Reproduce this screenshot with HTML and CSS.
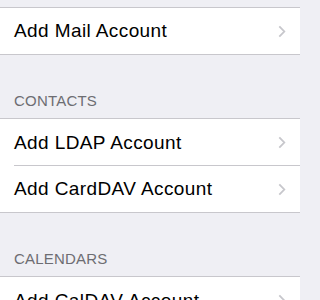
FILE: index.html
```html
<!DOCTYPE html>
<html>
<head>
<meta charset="utf-8">
<link rel="stylesheet" href="styles.css">
</head>
<body>
<div class="page">
  <div class="top-gap"></div>
  <div class="group">
    <div class="row"><span class="label">Add Mail Account</span><svg class="chev" width="8" height="13" viewBox="0 0 8 13"><path d="M1.3 1.3 L6.3 6.5 L1.3 11.7" fill="none" stroke="#c7c7cc" stroke-width="1.8"/></svg></div>
  </div>
  <div class="section-head">CONTACTS</div>
  <div class="group">
    <div class="row sep"><span class="label">Add LDAP Account</span><svg class="chev" width="8" height="13" viewBox="0 0 8 13"><path d="M1.3 1.3 L6.3 6.5 L1.3 11.7" fill="none" stroke="#c7c7cc" stroke-width="1.8"/></svg></div>
    <div class="row"><span class="label">Add CardDAV Account</span><svg class="chev" width="8" height="13" viewBox="0 0 8 13"><path d="M1.3 1.3 L6.3 6.5 L1.3 11.7" fill="none" stroke="#c7c7cc" stroke-width="1.8"/></svg></div>
  </div>
  <div class="section-head">CALENDARS</div>
  <div class="group">
    <div class="row sep"><span class="label">Add CalDAV Account</span><svg class="chev" width="8" height="13" viewBox="0 0 8 13"><path d="M1.3 1.3 L6.3 6.5 L1.3 11.7" fill="none" stroke="#c7c7cc" stroke-width="1.8"/></svg></div>
  </div>
</div>
</body>
</html>
```
FILE: styles.css
```css
html, body {
  margin: 0;
  padding: 0;
  background: #efeff4;
}
.page {
  width: 300px;
  height: 300px;
  overflow: hidden;
  font-family: "Liberation Sans", Arial, sans-serif;
}
.top-gap {
  height: 7px;
}
.group {
  background: #fff;
  border-top: 1px solid #c8c7cc;
  border-bottom: 1px solid #c8c7cc;
}
.row {
  height: 46px;
  display: flex;
  align-items: center;
  justify-content: space-between;
  padding: 0 14px;
  position: relative;
}
.row.sep {
  height: 47px;
}
.row.sep::after {
  content: "";
  position: absolute;
  left: 14px;
  right: 0;
  bottom: 0;
  height: 1px;
  background: #c8c7cc;
}
.label {
  font-size: 19px;
  letter-spacing: 0.4px;
  line-height: 46px;
  color: #000;
}
.chev {
  display: block;
}
.section-head {
  padding: 37px 14px 8px;
  font-size: 15px;
  line-height: 18px;
  letter-spacing: 0.2px;
  color: #6d6d72;
}
```
